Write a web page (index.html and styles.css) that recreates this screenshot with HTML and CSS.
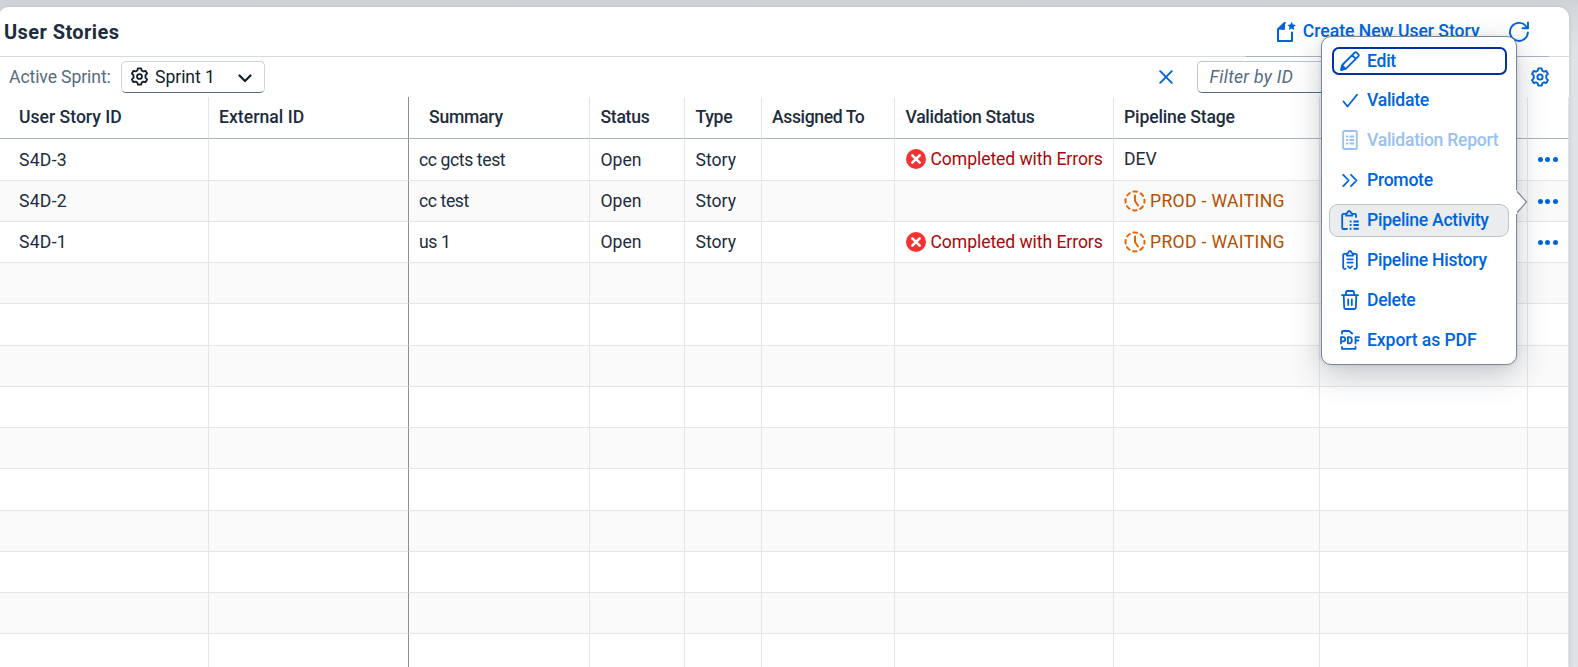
FILE: index.html
```
<!DOCTYPE html>
<html lang="en">
<head>
<meta charset="utf-8">
<title>User Stories</title>
<link rel="stylesheet" href="styles.css">
</head>
<body>
<svg class="defs" width="0" height="0">
  <symbol id="gear" viewBox="0 0 20 20"><g fill="none" stroke="currentColor" stroke-width="1.9" stroke-linejoin="round"><path d="M8.300 1.400h3.400l.6 2.300 1.700 1 2.300-.7 1.700 2.900-1.700 1.700v2.800l1.700 1.700-1.700 2.900-2.300-.7-1.700 1-.6 2.300H8.300l-.6-2.300-1.700-1-2.300.7L2 13.100l1.700-1.700V8.600L2 6.900 3.700 4l2.300.7 1.700-1z"/><circle cx="10" cy="10" r="2.600"/></g></symbol>
  <symbol id="error" viewBox="0 0 20 20"><circle cx="10" cy="10" r="10" fill="#f53232"/><path d="M6.300 6.300l7.400 7.400M13.700 6.300l-7.400 7.400" stroke="#fff" stroke-width="2.600" stroke-linecap="round"/></symbol>
  <symbol id="waiting" viewBox="0 0 22 22"><g fill="none" stroke="#e76500" stroke-width="2" stroke-linecap="round"><circle cx="11" cy="11" r="9.500" stroke-dasharray="3.600 3.862" stroke-dashoffset="1.800"/><path d="M11 5.500V11l3 4.500" stroke-linejoin="round"/></g></symbol>
</svg>
<main class="card">
  <header class="title-bar">
    <h1>User Stories</h1>
    <button class="action create">
      <svg width="20" height="22" viewBox="0 0 20 22"><path d="M8.500 2 2 8.200V20h14v-8.500" fill="none" stroke="currentColor" stroke-width="2" stroke-linejoin="round" stroke-linecap="round"/><path d="M1.500 8.500 8.500 1.500h1.800L9 3v4.500Q9 9 7.500 9z" fill="currentColor"/><path d="m15.600.8 1.300 2.700 2.900.4-2.100 2.100.5 2.900-2.600-1.400L13 8.900l.5-2.900-2.100-2.100 2.900-.4z" fill="currentColor"/></svg>
      <span>Create New User Story</span>
    </button>
    <button class="action refresh">
      <svg width="22" height="22" viewBox="0 0 22 22" fill="none" stroke="currentColor" stroke-width="1.900" stroke-linecap="round" stroke-linejoin="round"><path d="M19.900 11.500A9 9 0 1 1 18.600 6.200M20 1.500v5.800h-5.500"/></svg>
    </button>
  </header>
  <div class="toolbar">
    <span class="label">Active Sprint:</span>
    <div class="select">
      <svg width="19" height="19"><use href="#gear"/></svg>
      <span>Sprint 1</span>
      <svg class="chevron" width="14" height="9" viewBox="0 0 14 9"><path d="m1.500 1.500 5.500 5.500 5.500-5.500" fill="none" stroke="currentColor" stroke-width="2.200" stroke-linecap="round" stroke-linejoin="round"/></svg>
    </div>
    <svg class="clear" width="14" height="14" viewBox="0 0 14 14"><path d="m1.200 1.200 11.600 11.600m0-11.600L1.200 12.800" stroke="currentColor" stroke-width="1.900" stroke-linecap="round"/></svg>
    <div class="filter">Filter by ID</div>
    <svg class="settings" width="20" height="20"><use href="#gear"/></svg>
  </div>
  <div class="table">
    <div class="row head">
      <div>User Story ID</div><div>External ID</div><div class="summary">Summary</div><div>Status</div><div>Type</div><div>Assigned To</div><div>Validation Status</div><div>Pipeline Stage</div><div></div><div></div>
    </div>
    <div class="row first">
      <div>S4D-3</div><div></div><div>cc gcts test</div><div>Open</div><div>Story</div><div></div>
      <div class="state bad"><svg width="20" height="20"><use href="#error"/></svg>Completed with Errors</div>
      <div class="state">DEV</div><div></div><div class="more"><i></i><i></i><i></i></div>
    </div>
    <div class="row">
      <div>S4D-2</div><div></div><div>cc test</div><div>Open</div><div>Story</div><div></div><div></div>
      <div class="state wait"><svg width="22" height="22"><use href="#waiting"/></svg>PROD - WAITING</div>
      <div></div><div class="more"><i></i><i></i><i></i></div>
    </div>
    <div class="row">
      <div>S4D-1</div><div></div><div>us 1</div><div>Open</div><div>Story</div><div></div>
      <div class="state bad"><svg width="20" height="20"><use href="#error"/></svg>Completed with Errors</div>
      <div class="state wait"><svg width="22" height="22"><use href="#waiting"/></svg>PROD - WAITING</div>
      <div></div><div class="more"><i></i><i></i><i></i></div>
    </div>
    <div class="row"><div></div><div></div><div></div><div></div><div></div><div></div><div></div><div></div><div></div><div></div></div>
    <div class="row"><div></div><div></div><div></div><div></div><div></div><div></div><div></div><div></div><div></div><div></div></div>
    <div class="row"><div></div><div></div><div></div><div></div><div></div><div></div><div></div><div></div><div></div><div></div></div>
    <div class="row"><div></div><div></div><div></div><div></div><div></div><div></div><div></div><div></div><div></div><div></div></div>
    <div class="row"><div></div><div></div><div></div><div></div><div></div><div></div><div></div><div></div><div></div><div></div></div>
    <div class="row"><div></div><div></div><div></div><div></div><div></div><div></div><div></div><div></div><div></div><div></div></div>
    <div class="row"><div></div><div></div><div></div><div></div><div></div><div></div><div></div><div></div><div></div><div></div></div>
    <div class="row"><div></div><div></div><div></div><div></div><div></div><div></div><div></div><div></div><div></div><div></div></div>
    <div class="row"><div></div><div></div><div></div><div></div><div></div><div></div><div></div><div></div><div></div><div></div></div>
    <div class="row"><div></div><div></div><div></div><div></div><div></div><div></div><div></div><div></div><div></div><div></div></div>
  </div>
</main>
<nav class="menu">
  <button class="item focused"><svg viewBox="0 0 20 20"><path d="M1.200 18.800 2.300 14 14.600 1.700a1.500 1.500 0 0 1 2.100 0l1.600 1.600a1.500 1.500 0 0 1 0 2.100L6 17.700zM12.200 4.200l3.600 3.600M2.200 14.500l3.300 3.300"/><path d="M1.200 18.800 2 15l3 3z" fill="currentColor"/></svg><span>Edit</span></button>
  <button class="item"><svg viewBox="0 0 20 20"><path d="m3.500 11.500 4 5L17 4.800"/></svg><span>Validate</span></button>
  <button class="item disabled"><svg viewBox="0 0 20 20"><rect x="3.200" y="1" width="13.600" height="18" rx="1"/><path d="M6.800 6.500h.8M10.200 6.500h3.200M6.800 10h.8M10.200 10h3.200M6.800 13.500h.8M10.200 13.500h3.200"/></svg><span>Validation Report</span></button>
  <button class="item"><svg viewBox="0 0 20 20"><path d="m3.200 4.800 5.500 5.700-5.500 5.700M11 4.800l5.500 5.700-5.500 5.700"/></svg><span>Promote</span></button>
  <button class="item active"><svg viewBox="0 0 20 20"><path d="M7 19H3.500Q2.200 19 2.200 17.700V5Q2.200 3.800 3.500 3.800H6M13 3.800h2Q16 3.800 16 5v2"/><path d="M6.200 3.500V5.700h6V3.500L11 3Q10.600 1 9.200 1T7.400 3z"/><path d="M9.700 11.500h1.800M13.500 11.500h5.300M9.700 15h1.800M13.500 15h5.300M9.700 18.800h1.800M13.500 18.800h5.300" stroke-linecap="butt" stroke-width="2"/></svg><span>Pipeline Activity</span></button>
  <button class="item"><svg viewBox="0 0 20 20"><path d="M5.500 18.800H4.400Q3.200 18.800 3.200 17.600V5Q3.200 3.800 4.400 3.800H7M13 3.800h2.600q1.200 0 1.200 1.200v12.600q0 1.200-1.200 1.200h-1.100"/><path d="M7 3.500v2.200h6V3.500L11.800 3Q11.400 1 10 1T8.200 3zM7.300 9.300h5.400M7.300 12.600h5.400M8 16.400l2 1.800 2-1.800"/></svg><span>Pipeline History</span></button>
  <button class="item"><svg viewBox="0 0 20 20"><path d="M2 5.200h16M6 5V2.300Q6 1 7.300 1h5.400Q14 1 14 2.300V5M3.700 5.500l.5 12.200Q4.300 19 5.600 19h8.800q1.300 0 1.400-1.300l.5-12.200M8.200 9.500V15M11.800 9.500V15"/></svg><span>Delete</span></button>
  <button class="item"><svg viewBox="0 0 20 20"><path d="M2 3.500V2.200Q2 1 3.200 1H9l3.200 2.500M2 17v1.800h13.500V17M1 13.500V7.200h2.200a2 2 0 0 1 0 4.100H1M7.900 7.200v6.100h1.200q2.700 0 2.700-3.100T9.100 7.200zM15.500 13.500V7.200H19M15.500 10.500h3"/></svg><span>Export as PDF</span></button>
  <svg class="arrow" width="12" height="24" viewBox="0 0 12 24"><path d="M0 0v24h1v-2l9.500-10L1 2V0z" fill="#fff"/><path d="M1 1.500 10.500 12 1 22.500" fill="none" stroke="#7b8794" stroke-width="1.200"/></svg>
</nav>
</body>
</html>
```
FILE: styles.css
```
* { box-sizing: border-box; }
body {
  margin: 0;
  height: 667px;
  overflow: hidden;
  padding-top: 7px;
  background: linear-gradient(#ccd1d6, #d3d8dc 7px, #dfe3e7 50px);
  font: 17.600px/20px Roboto, "Liberation Sans", sans-serif;
  color: #1d2d3e;
}
.defs { position: absolute; }
button { border: 0; padding: 0; background: none; font: inherit; color: inherit; }
svg { flex: none; display: block; }
.card {
  width: 1571px;
  height: 672px;
  margin-left: -2px;
  padding-left: 2px;
  background: #fff;
  border-radius: 11px;
  overflow: hidden;
  box-shadow: 0 0 4px rgba(85, 107, 130, .22);
}
.title-bar {
  display: flex;
  align-items: center;
  height: 50px;
  padding-left: 4px;
  background: linear-gradient(#a8b3bd, #a8b3bd) 1246px 100% / 303px 1px no-repeat, linear-gradient(#d9d9d9, #d9d9d9) 0 100% / 100% 1px no-repeat;
}
h1 { margin: 0; font-size: 20px; font-weight: 700; letter-spacing: .42px; }
.action { display: flex; align-items: center; color: #0064d9; font-weight: 500; }
.create { margin-left: auto; gap: 7px; padding-bottom: 1px; letter-spacing: -.03px; }
.create span { margin-top: -1px; }
.refresh { margin: 0 39px 0 28.500px; padding-bottom: 1px; }
.toolbar { display: flex; align-items: center; height: 40px; padding: 0 19.500px 0 9px; }
.label { width: 112px; color: #556b82; letter-spacing: -.1px; }
.select {
  display: flex;
  align-items: center;
  width: 144px;
  height: 32px;
  padding: 0 12px 0 8px;
  border: 1px solid #ccd4dc;
  border-bottom-color: #556b82;
  border-radius: 5px;
  color: #131e29;
}
.select span { margin-left: 6px; letter-spacing: -.05px; }
.select svg:first-child { margin-top: -1px; }
.chevron { margin: 2px 0 0 auto; }
.clear { margin-left: auto; color: #0064d9; }
.filter {
  width: 320px;
  height: 32px;
  margin: 0 13px 0 24px;
  padding: 5px 12px;
  border: 1px solid #bcc5ce;
  border-bottom-color: #556b82;
  border-radius: 5px;
  color: #556b82;
  font-style: italic;
  letter-spacing: .3px;
}
.settings { color: #0064d9; }
.row {
  display: grid;
  grid-template-columns: 209px 200px 181px 95px 77px 133px 219px 206px 208px 41px;
  height: 41.250px;
}
.row > div {
  display: flex;
  align-items: center;
  padding: 1px 0 0 10.500px;
  border-right: 1px solid #e5e5e5;
  border-bottom: 1px solid #e5e5e5;
  white-space: nowrap;
}
.row > div:first-child { padding-left: 19px; letter-spacing: .25px; }
.row > div:nth-child(2) { padding-left: 10px; border-right-color: #8f8f8f; }
.row > div:nth-child(3) { padding-left: 10px; letter-spacing: -.4px; }
.row > div:nth-child(8) { padding-left: 10px; }
.row:nth-child(odd) { background: #fafafa; }
.row.head { height: 42.250px; background: #fff; font-weight: 500; }
.row.head > div { padding-top: 0; padding-bottom: 1px; border-bottom-color: #a8b3bd; letter-spacing: -.3px; }
.row.head > div:first-child { letter-spacing: 0; }
.row.head > div:nth-child(2) { letter-spacing: .03px; }
.row.head > div:nth-child(6) { padding-left: 10px; letter-spacing: -.4px; }
.row.head > div:nth-child(8) { letter-spacing: -.15px; }
.row.head .summary { padding-left: 20px; letter-spacing: -.25px; }
.row .state { gap: 5px; letter-spacing: -.08px; }
.row.first .state { padding-top: 0; padding-bottom: 1px; }
.bad { color: #aa0808; }
.row .wait { gap: 4px; padding-left: 9.500px; color: #b44f00; letter-spacing: .33px; }
.row .more { gap: 2.700px; padding-left: 9.500px; }
.more i { width: 5px; height: 5px; border-radius: 50%; background: #0064d9; }
.menu {
  position: absolute;
  left: 1321px;
  top: 36px;
  width: 196px;
  height: 329px;
  padding: 7px 7px;
  display: flex;
  flex-direction: column;
  gap: 7px;
  border: 1px solid #7b8794;
  border-radius: 10px;
  background: #fff;
  box-shadow: 0 10px 30px rgba(34, 53, 72, .25), 0 0 4px rgba(34, 53, 72, .15);
}
.item {
  display: flex;
  align-items: center;
  flex: none;
  gap: 7.500px;
  height: 33px;
  padding: 0 0 1px 9.500px;
  border: 1px solid transparent;
  border-radius: 9px;
  color: #0064d9;
  font-weight: 500;
  letter-spacing: -.28px;
}
.item svg { width: 20px; height: 20px; fill: none; stroke: currentColor; stroke-width: 1.800; stroke-linecap: round; stroke-linejoin: round; }
.item span { margin-top: -1px; }
.item:last-of-type { letter-spacing: -.1px; }
.focused { height: 28px; margin: 3px 2px 2px 3px; padding: 0 0 0 5.500px; border: 2px solid #0032a5; border-radius: 7px; }
.disabled { color: #99c1f0; }
.active { background: #eaecee; border-color: #bcc3ca; }
.menu .arrow { position: absolute; left: 193.500px; top: 153px; }
```
